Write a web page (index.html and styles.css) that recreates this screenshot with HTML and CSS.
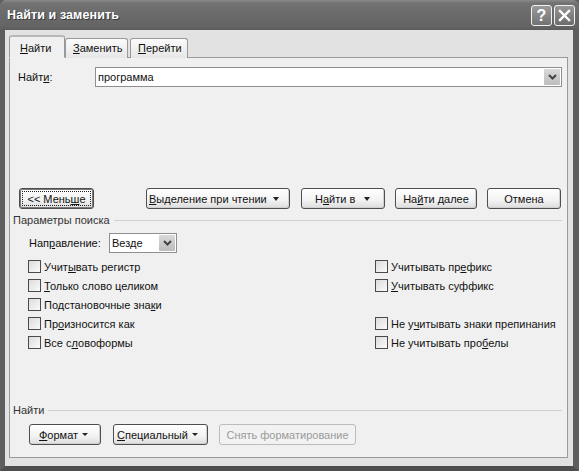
FILE: index.html
```html
<!DOCTYPE html>
<html>
<head>
<meta charset="utf-8">
<link rel="stylesheet" href="styles.css">
</head>
<body>
<div class="window">
  <div class="titlebar">
    <span class="title">Найти и заменить</span>
    <div class="tbtns">
      <span class="tbtn">?</span>
      <span class="tbtn close">
        <svg width="13" height="13" viewBox="0 0 13 13"><path d="M2 2 L11 11 M11 2 L2 11" stroke="#fff" stroke-width="2.4" stroke-linecap="square"/></svg>
      </span>
    </div>
  </div>
  <div class="body">
    <div class="tabs">
      <div class="tab active"><span><u>Н</u>айти</span></div>
      <div class="tab"><span><u>З</u>аменить</span></div>
      <div class="tab"><span><u>П</u>ерейти</span></div>
    </div>
    <div class="panel">
      <div class="findrow">
        <span class="findlabel">Найт<u>и</u>:</span>
        <div class="combo wide">
          <span class="combotext">программа</span>
          <span class="arrowbtn"><svg width="9" height="6" viewBox="0 0 9 6"><path d="M1 1 L4.5 4.5 L8 1" fill="none" stroke="#444" stroke-width="2"/></svg></span>
        </div>
      </div>
      <div class="btnrow">
        <button class="btn focus w-less"><span class="inner"><span>&lt;&lt; Мень<u>ш</u>е</span></span></button>
        <button class="btn w-sel"><span class="lbl"><u>В</u>ыделение при чтении</span><span class="tri"></span></button>
        <button class="btn w-in"><span class="lbl">Н<u>а</u>йти в</span><span class="tri"></span></button>
        <button class="btn w-next"><span>На<u>й</u>ти далее</span></button>
        <button class="btn w-cancel"><span>Отмена</span></button>
      </div>
      <div class="group g1"><span>Параметры поиска</span><span class="line"></span></div>
      <div class="dirrow">
        <span class="dirlabel">Нап<u>р</u>авление:</span>
        <div class="combo small">
          <span class="combotext">Везде</span>
          <span class="arrowbtn"><svg width="9" height="6" viewBox="0 0 9 6"><path d="M1 1 L4.5 4.5 L8 1" fill="none" stroke="#444" stroke-width="2"/></svg></span>
        </div>
      </div>
      <div class="checks">
        <label class="chk"><span class="box"></span><span>Учит<u>ы</u>вать регистр</span></label>
        <label class="chk"><span class="box"></span><span>Учитывать пр<u>е</u>фикс</span></label>
        <label class="chk"><span class="box"></span><span><u>Т</u>олько слово целиком</span></label>
        <label class="chk"><span class="box"></span><span><u>У</u>читывать суффикс</span></label>
        <label class="chk"><span class="box"></span><span>Подстановочные зна<u>к</u>и</span></label>
        <span></span>
        <label class="chk"><span class="box"></span><span>Пр<u>о</u>износится как</span></label>
        <label class="chk"><span class="box"></span><span>Не у<u>ч</u>итывать знаки препинания</span></label>
        <label class="chk"><span class="box"></span><span>Все с<u>л</u>овоформы</span></label>
        <label class="chk"><span class="box"></span><span>Не учитывать про<u>б</u>елы</span></label>
      </div>
      <div class="group g2"><span>Найти</span><span class="line"></span></div>
      <div class="bottomrow">
        <button class="btn w-fmt"><span class="lbl"><u>Ф</u>ормат</span><span class="tri small"></span></button>
        <button class="btn w-spec"><span class="lbl"><u>С</u>пециальный</span><span class="tri small"></span></button>
        <button class="btn disabled w-clear"><span>Снять форматирование</span></button>
      </div>
    </div>
  </div>
</div>
</body>
</html>
```
FILE: styles.css
```css
* { box-sizing: border-box; }
html, body { margin: 0; padding: 0; background: #5a5a5a; }
body { font-family: "Liberation Sans", Arial, sans-serif; font-size: 11px; color: #111; }
u { text-decoration: underline; text-underline-offset: 1px; }
span, label, button { white-space: nowrap; }

.window {
  width: 579px; height: 471px;
  background: #e2e2e2;
  border-left: 5px solid #5e5e5e;
  border-right: 6px solid #5e5e5e;
  border-bottom: 5px solid #4e4e4e;
  display: flex; flex-direction: column;
}
.titlebar {
  height: 30px; margin: 0 -6px 0 -5px;
  background: linear-gradient(#8a8a8a 0px, #727272 3px, #6a6a6a 15px, #636363 28px, #5a5a5a 30px);
  border-radius: 6px 6px 0 0;
  display: flex; align-items: center; justify-content: space-between;
  padding: 0 4px 0 7px;
}
.title { color: #fff; font-weight: bold; font-size: 12.5px; text-shadow: 1px 1px 0 #3a3a3a; letter-spacing: 0.1px; }
.tbtns { display: flex; gap: 2px; margin-top: 1px; }
.tbtn {
  width: 21px; height: 21px; border: 1px solid #f2f2f2; border-radius: 3px;
  background: linear-gradient(#9a9a9a, #727272);
  color: #fff; font-weight: bold; font-size: 16px;
  display: flex; align-items: center; justify-content: center;
}
.tbtn.close { background: linear-gradient(#969696, #6c6c6c); }

.body { padding: 5px 5px 0 4px; }
.tabs { display: flex; align-items: flex-end; height: 23px; margin-bottom: -1px; position: relative; z-index: 2; }
.tab {
  height: 20px; padding: 3px 0 0 7px; border: 1px solid #999; border-bottom: none;
  border-radius: 3px 3px 0 0; background: linear-gradient(#fbfbfb, #e6e6e6);
  margin-right: 1px;
}
.tab:nth-child(2) { width: 63px; }
.tab:nth-child(3) { width: 58px; margin-left: 1px; }
.tab.active {
  height: 23px; width: 56px; background: #f0f0f0; padding: 5px 0 0 10px;
  border-top: 2px solid #b8b8b8; border-bottom: 1px solid #f0f0f0; margin-right: 0;
}
.panel {
  height: 401px; border: 1px solid #9a9a9a; background: #f0f0f0;
  padding: 9px 5px 0 8px;
}
.findrow { display: flex; align-items: center; height: 20px; }
.findlabel { width: 77px; }
.combo {
  height: 20px; border: 1px solid #8f8f8f; background: #fff;
  display: flex; align-items: center; justify-content: space-between; padding: 1px 1px 1px 2px;
}
.combo.wide { flex: 1; }
.combo.small { width: 68px; }
.arrowbtn {
  width: 16px; height: 16px; background: linear-gradient(#d9d9d9, #bdbdbd); border-radius: 1px;
  display: flex; align-items: center; justify-content: center;
}

.btnrow { display: flex; margin-top: 101px; margin-left: 1px; height: 21px; }
.btn {
  font: inherit; color: #111; height: 21px;
  border: 1px solid #4e4e4e; border-radius: 3px;
  background: linear-gradient(#ffffff, #f2f2f2 60%, #dcdcdc);
  padding: 0; display: flex; align-items: center; justify-content: center;
  box-shadow: inset -1px -1px 0 #d0d0d0;
}
.btn.focus { box-shadow: inset 0 0 0 1px #7a7a7a; padding: 2px; }
.btn.focus .inner { border: 1px dotted #222; flex: 1; height: 100%; display: flex; align-items: center; justify-content: center; }
.btn .lbl { flex: 1; text-align: left; padding-left: 3px; }
.tri { width: 0; height: 0; border-left: 3.5px solid transparent; border-right: 3.5px solid transparent; border-top: 4px solid #222; margin-right: 10px; margin-left: 4px; flex: none; }
.tri.small { border-left-width: 3px; border-right-width: 3px; border-top-width: 3px; }
.w-less { width: 75px; }
.w-sel { width: 144px; margin-left: 52px; }
.w-sel .lbl { padding-left: 2px; }
.w-in { width: 84px; margin-left: 11px; }
.w-in .lbl { padding-left: 13px; }
.w-in .tri { margin-right: 14px; }
.w-next { width: 82px; margin-left: 10px; }
.w-cancel { width: 74px; margin-left: 10px; }

.group { display: flex; align-items: center; height: 14px; color: #333; margin-left: -5px; }
.group .line { flex: 1; border-top: 1px solid #cfcfcf; margin-left: 4px; margin-top: 1px; }
.g1 { margin-top: 4px; }
.g2 { margin-top: 51px; }

.dirrow { display: flex; align-items: center; height: 20px; margin-top: 6px; margin-left: 11px; }
.dirlabel { width: 80px; }

.checks { display: grid; grid-template-columns: 347px 1fr; grid-auto-rows: 19px; margin-top: 4px; margin-left: 10px; }
.chk { display: flex; align-items: center; }
.box { width: 13px; height: 13px; border: 1px solid #4a4a4a; background: linear-gradient(135deg, #dcdcdc, #fafafa); margin-right: 3px; flex: none; }

.bottomrow { display: flex; margin-top: 7px; margin-left: 11px; }
.w-fmt { width: 72px; }
.w-fmt .lbl { padding-left: 9px; }
.w-fmt .tri { margin-right: 12px; }
.w-spec { width: 95px; margin-left: 12px; }
.w-spec .lbl { padding-left: 3px; }
.w-spec .tri { margin-right: 9px; }
.btn.disabled { width: 137px; margin-left: 11px; color: #9a9a9a; border-color: #bcbcbc; background: #f2f2f2; box-shadow: none; }
```
